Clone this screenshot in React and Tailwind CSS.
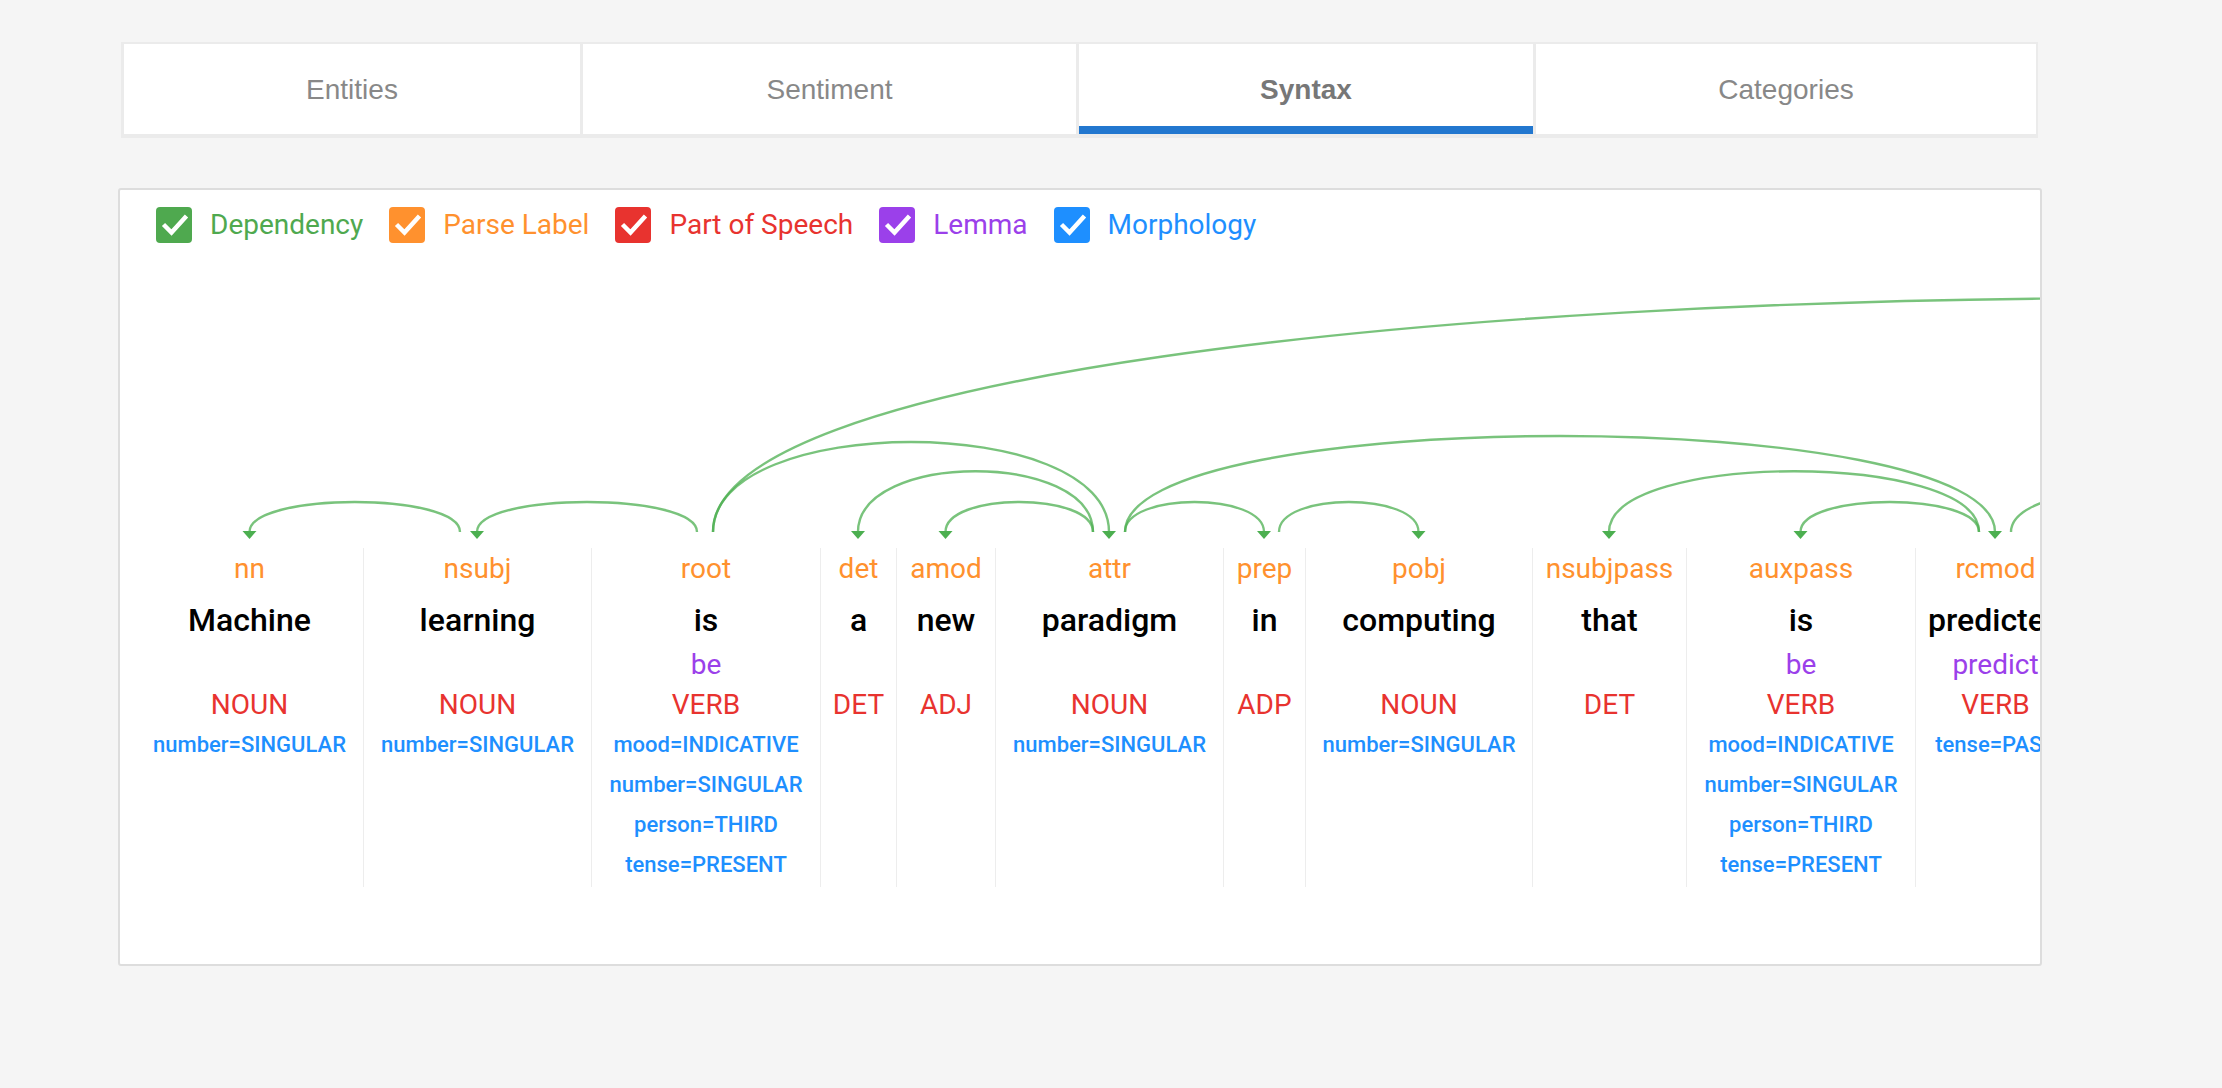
import React from 'react'

const tabs = [
  { name: 'Entities', w: 'w-[456px]' },
  { name: 'Sentiment', w: 'w-[493px]' },
  { name: 'Syntax', w: 'w-[454px]', active: true },
  { name: 'Categories', w: 'w-[500px]' },
]

const legend = [
  { name: 'Dependency', box: 'bg-[#4fa94f]', text: 'text-[#4fa94f]' },
  { name: 'Parse Label', box: 'bg-[#ff912e]', text: 'text-[#ff912e]' },
  { name: 'Part of Speech', box: 'bg-[#e8332f]', text: 'text-[#e8332f]' },
  { name: 'Lemma', box: 'bg-[#9b40ea]', text: 'text-[#9b40ea]' },
  { name: 'Morphology', box: 'bg-[#1e8fff]', text: 'text-[#1e8fff]' },
]

const verbMorph = ['mood=INDICATIVE', 'number=SINGULAR', 'person=THIRD', 'tense=PRESENT']

const tokens = [
  { label: 'nn', word: 'Machine', pos: 'NOUN', morph: ['number=SINGULAR'], w: 'w-[227px]' },
  { label: 'nsubj', word: 'learning', pos: 'NOUN', morph: ['number=SINGULAR'], w: 'w-[228px]' },
  { label: 'root', word: 'is', lemma: 'be', pos: 'VERB', morph: verbMorph, w: 'w-[229px]' },
  { label: 'det', word: 'a', pos: 'DET', morph: [], w: 'w-[76px]' },
  { label: 'amod', word: 'new', pos: 'ADJ', morph: [], w: 'w-[99px]' },
  { label: 'attr', word: 'paradigm', pos: 'NOUN', morph: ['number=SINGULAR'], w: 'w-[228px]' },
  { label: 'prep', word: 'in', pos: 'ADP', morph: [], w: 'w-[82px]' },
  { label: 'pobj', word: 'computing', pos: 'NOUN', morph: ['number=SINGULAR'], w: 'w-[227px]' },
  { label: 'nsubjpass', word: 'that', pos: 'DET', morph: [], w: 'w-[154px]' },
  { label: 'auxpass', word: 'is', lemma: 'be', pos: 'VERB', morph: verbMorph, w: 'w-[229px]' },
  { label: 'rcmod', word: 'predicted', lemma: 'predict', pos: 'VERB', morph: ['tense=PAST'], w: 'w-[160px]' },
  { label: 'aux', word: 'to', pos: 'PRT', morph: [], w: 'w-[80px]' },
]

// [from x, to x, curve height, arrow]
const arcs = [
  [324, 113.5, 40, true],
  [561, 341, 40, true],
  [577, 973, 120, true],
  [577, 3454, 312, false],
  [957, 722, 81, true],
  [957, 809.5, 40, true],
  [989, 1128, 40, true],
  [989, 1859, 128, true],
  [1143, 1282.5, 40, true],
  [1843, 1473, 81, true],
  [1843, 1664.5, 40, true],
  [1875, 2160, 60, false],
]

const BASE = 290

function Arcs() {
  return (
    <svg width="2400" height="306" className="block">
      {arcs.map(([a, b, h, arrow], i) => (
        <g key={i}>
          <path
            d={`M${a} ${BASE} C${a} ${BASE - h} ${b} ${BASE - h} ${b} ${BASE}`}
            fill="none"
            stroke="#4caf50"
            strokeOpacity="0.75"
            strokeWidth="2.4"
          />
          {arrow && (
            <polygon points={`${b - 7},${BASE - 1} ${b + 7},${BASE - 1} ${b},${BASE + 7}`} fill="#4caf50" />
          )}
        </g>
      ))}
    </svg>
  )
}

function Token({ t, first }) {
  return (
    <div className={`${t.w} shrink-0 h-[339px] text-center whitespace-nowrap ${first ? '' : 'border-l border-[#ededed]'}`}>
      <div className="h-[41px] pt-[1px] leading-[40px] text-[28px] text-[#ff912e]">{t.label}</div>
      <div className="h-[62px] leading-[62px] text-[32px] font-medium text-black">{t.word}</div>
      <div className="h-[27px] leading-[27px] text-[28px] text-[#9b40ea]">{t.lemma}</div>
      <div className="h-[47px] pt-[6px] leading-[41px] text-[28px] text-[#e8332f]">{t.pos}</div>
      {t.morph.map((m) => (
        <div key={m} className="h-[40px] leading-[40px] text-[22px] font-medium text-[#1e8fff]">{m}</div>
      ))}
    </div>
  )
}

export default function App() {
  return (
    <div className="min-h-screen bg-[#f5f5f5] pt-[42px] pl-[118px] font-['Roboto',sans-serif]">
      <div className="w-[1924px]">
        {/* tabs */}
        <div className="ml-[3px] mr-[4px] flex gap-[3px] bg-[#ebebeb] pl-[3px] pt-[2px] pb-[4px] font-['Liberation_Sans',Arial,sans-serif]">
          {tabs.map((tab) => (
            <div key={tab.name} className={`${tab.w} relative flex h-[90px] items-center justify-center bg-white pt-[2px] text-[28px] ${tab.active ? 'font-bold text-[#777777]' : 'text-[#888888]'}`}>
              {tab.name}
              {tab.active && <span className="absolute bottom-0 left-0 right-0 h-[8px] bg-[#2277cf]" />}
            </div>
          ))}
        </div>

        {/* syntax panel */}
        <div className="mt-[50px] h-[778px] overflow-hidden rounded-[3px] border-2 border-[#dddddd] bg-white">
          <div className="flex items-center pt-[17px] pl-[36px]">
            {legend.map((l) => (
              <div key={l.name} className="mr-[26px] flex items-center">
                <span className={`${l.box} flex h-[36px] w-[36px] items-center justify-center rounded-[4px]`}>
                  <svg width="36" height="36" viewBox="0 0 36 36">
                    <path d="M7.5 17.5 L15.5 25.5 L30.5 9" fill="none" stroke="white" strokeWidth="4.5" />
                  </svg>
                </span>
                <span className={`${l.text} ml-[18px] text-[28px] leading-[36px]`}>{l.name}</span>
              </div>
            ))}
          </div>

          <div className="-mt-[1px] pl-[16px]">
            <Arcs />
            <div className="flex">
              {tokens.map((t, i) => (
                <Token key={i} t={t} first={i === 0} />
              ))}
            </div>
          </div>
        </div>
      </div>
    </div>
  )
}
